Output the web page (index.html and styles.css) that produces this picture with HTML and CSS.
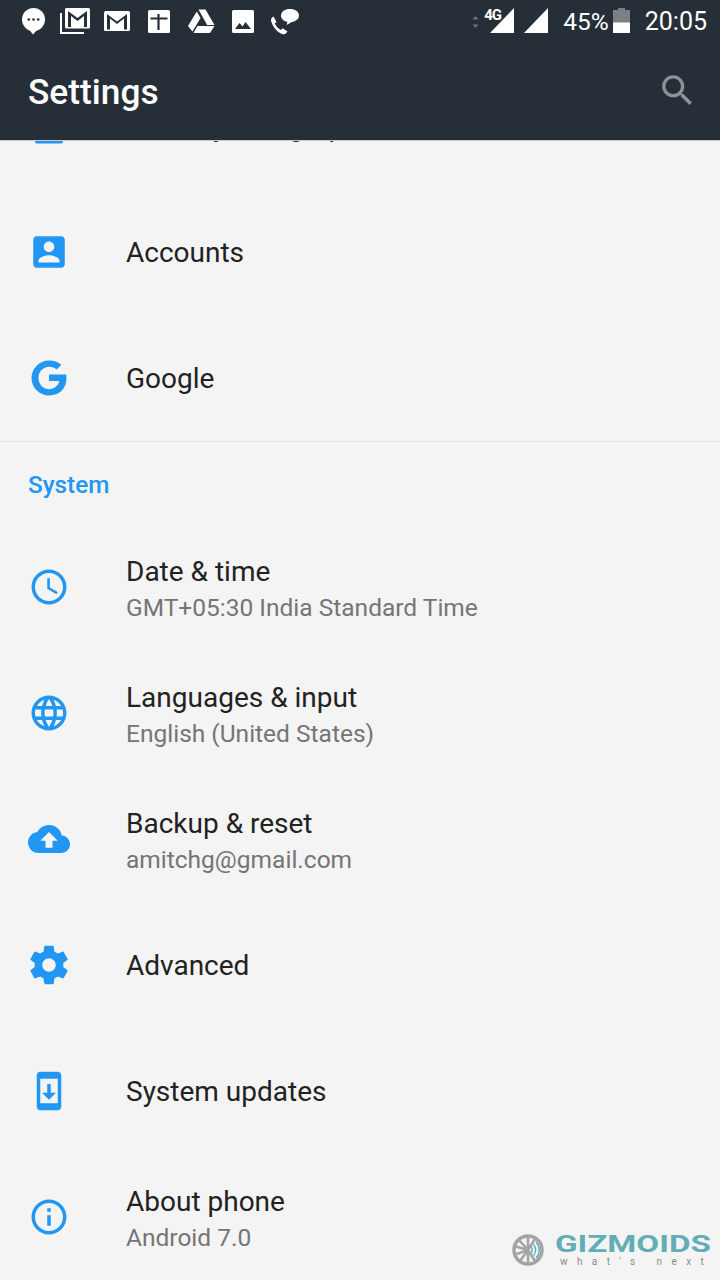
FILE: index.html
```html
<!DOCTYPE html>
<html lang="en">
<head>
    <meta charset="UTF-8">
    <meta name="viewport" content="width=device-width, initial-scale=1.0">
    <title>Settings</title>
    <link rel="stylesheet" href="styles.css">
</head>
<body>
    <div class="phone">
        <header class="appbar">
            <div class="statusbar">
                <div class="notif-icons">
                    <svg class="notif" viewBox="0 0 42 40"><circle cx="21.500" cy="19.500" r="11.500" fill="#fff"/><path d="M15 27l6 7.500 6.500-7.500z" fill="#fff"/><circle cx="16.800" cy="19.500" r="1.300" fill="#262e38"/><circle cx="21.500" cy="19.500" r="1.300" fill="#262e38"/><circle cx="26.200" cy="19.500" r="1.300" fill="#262e38"/></svg>
                    <svg class="notif" viewBox="0 0 42 40"><path d="M7 13v20h23" fill="none" stroke="#fff" stroke-width="2"/><rect x="11" y="8" width="25" height="20.500" rx="1.500" fill="#fff"/><path d="M14 27V11l9.500 7 9.500-7v16h-3V16l-6.500 5-6.500-5v11z" fill="#262e38"/></svg>
                    <svg class="notif" viewBox="0 0 42 40"><rect x="8" y="11" width="26" height="20" rx="1.500" fill="#fff"/><path d="M11 29.500V14l10 7.500L31 14v15.500h-3v-11L21 24l-7-5.500v11z" fill="#262e38"/></svg>
                    <svg class="notif" viewBox="0 0 42 40"><rect x="10" y="10" width="22" height="23" rx="1.500" fill="#fff"/><path d="M12.500 18.500h17M20.500 14v16" stroke="#262e38" stroke-width="2.200" fill="none"/></svg>
                    <svg class="notif" viewBox="0 0 42 40"><path d="M18.500 9.500h7L34.500 25h-7.300z" fill="#fff"/><path d="M16.800 11.500l3.700 6.500L12.500 31.500 8 26z" fill="#fff"/><path d="M17.500 26h17L30 33H13.500z" fill="#fff"/></svg>
                    <svg class="notif" viewBox="0 0 42 40"><rect x="10" y="10" width="22" height="23" rx="1.500" fill="#fff"/><path d="M13 29l4.500-6 3 3.500 3-4.500 5.500 7z" fill="#262e38"/></svg>
                    <svg class="notif" viewBox="0 0 42 40"><path d="M9.500 16.500l3 5.500-1.800 1.500c1.500 3 3.500 5.200 6.300 6.500l1.800-1.700 4.700 3.200-2 2.300c-1 .6-2.200.7-3.500.2C12.500 31.500 8.500 26.500 7 20.500c-.2-1.500.8-3 2.500-4z" fill="#fff"/><path d="M26 9c-5 0-9 2.700-9 6.500 0 3.400 3 5.900 6.500 6.400l-1 3.100 5.500-3c3.700-.7 7-3 7-6.500C35 11.700 31 9 26 9z" fill="#fff"/></svg>
                </div>
                <div class="sys-icons">
                    <svg class="updown" viewBox="0 0 7 12"><path d="M3.500 0L6.500 3.500H.5zM3.500 12L.5 8.500h6z" fill="#6f747b"/></svg>
                    <span class="net-label">4G</span>
                    <svg class="signal lte" viewBox="0 0 24 25"><path d="M24 0v25H0z" fill="#fff"/></svg>
                    <svg class="signal" viewBox="0 0 24 25"><path d="M24 0v25H0z" fill="#fff"/></svg>
                    <span class="battery-text">45%</span>
                    <svg class="battery" viewBox="0 0 17 25"><path d="M5 0h7v2h5v13H0V2h5z" fill="#7b8087"/><rect y="14.500" width="17" height="10.500" fill="#fff"/></svg>
                    <span class="clock">20:05</span>
                </div>
            </div>
            <div class="toolbar">
                <h1>Settings</h1>
                <svg class="search" viewBox="0 0 24 24"><path d="M15.500 14h-.79l-.28-.27C15.410 12.590 16 11.110 16 9.500 16 5.910 13.090 3 9.500 3S3 5.910 3 9.500 5.910 16 9.500 16c1.610 0 3.090-.59 4.230-1.570l.27.28v.79l5 4.990L20.490 19l-4.990-5zm-6 0C7.010 14 5 11.990 5 9.500S7.010 5 9.500 5 14 7.010 14 9.500 11.990 14 9.500 14z"/></svg>
            </div>
        </header>

        <main class="list">
            <div class="row">
                <svg class="icon" viewBox="0 0 24 24"><rect x="4" y="3" width="16" height="19" rx="1.500"/></svg>
                <div class="label"><div class="title">Security &amp; fingerprint</div></div>
            </div>
            <div class="row">
                <svg class="icon" viewBox="0 0 24 24"><path d="M3 5v14c0 1.100.89 2 2 2h14c1.100 0 2-.9 2-2V5c0-1.100-.9-2-2-2H5c-1.110 0-2 .9-2 2zm12 4c0 1.660-1.340 3-3 3s-3-1.340-3-3 1.340-3 3-3 3 1.340 3 3zm-9 8c0-2 4-3.100 6-3.100s6 1.100 6 3.100v1H6v-1z"/></svg>
                <div class="label"><div class="title">Accounts</div></div>
            </div>
            <div class="row">
                <svg class="icon" viewBox="0 0 24 24"><path d="M12.100 2C6.500 2 2 6.500 2 12s4.500 10 10.100 10c5.800 0 9.900-4 9.900-9.800 0-.9-.1-1.500-.2-2.200H12v3.700h5.900c-.5 2.600-2.900 4.700-5.800 4.700-3.500 0-6.100-2.900-6.100-6.400s2.600-6.400 6.100-6.400c1.700 0 3.100.6 4.200 1.600l2.800-2.800C17.100 2.900 14.800 2 12.100 2z"/></svg>
                <div class="label"><div class="title">Google</div></div>
            </div>
            <div class="category">System</div>
            <div class="row">
                <svg class="icon" viewBox="0 0 24 24"><path d="M11.990 2C6.470 2 2 6.480 2 12s4.470 10 9.990 10C17.520 22 22 17.520 22 12S17.520 2 11.990 2zM12 20c-4.420 0-8-3.580-8-8s3.580-8 8-8 8 3.580 8 8-3.580 8-8 8zM12.500 7H11v6l5.250 3.150.75-1.230-4.500-2.670z"/></svg>
                <div class="label"><div class="title">Date &amp; time</div><div class="sub">GMT+05:30 India Standard Time</div></div>
            </div>
            <div class="row">
                <svg class="icon" viewBox="0 0 24 24"><path d="M11.990 2C6.470 2 2 6.480 2 12s4.470 10 9.990 10C17.520 22 22 17.520 22 12S17.520 2 11.990 2zm6.930 6h-2.950c-.32-1.250-.78-2.450-1.380-3.560 1.840.63 3.370 1.910 4.330 3.560zM12 4.040c.83 1.200 1.480 2.530 1.910 3.960h-3.820c.43-1.430 1.080-2.760 1.910-3.960zM4.260 14C4.100 13.360 4 12.690 4 12s.1-1.360.26-2h3.380c-.08.66-.14 1.320-.14 2 0 .68.06 1.340.14 2H4.260zm.82 2h2.950c.32 1.250.78 2.450 1.380 3.560-1.840-.63-3.370-1.900-4.330-3.560zm2.950-8H5.080c.96-1.660 2.490-2.930 4.330-3.560C8.810 5.550 8.350 6.750 8.030 8zM12 19.960c-.83-1.200-1.480-2.530-1.910-3.960h3.820c-.43 1.430-1.080 2.760-1.910 3.960zM14.340 14H9.660c-.09-.66-.16-1.320-.16-2 0-.68.07-1.350.16-2h4.680c.09.650.16 1.320.16 2 0 .68-.07 1.340-.16 2zm.25 5.560c.6-1.110 1.060-2.310 1.380-3.560h2.950c-.96 1.650-2.490 2.930-4.330 3.560zM16.360 14c.08-.66.14-1.320.14-2 0-.68-.06-1.340-.14-2h3.380c.16.640.26 1.310.26 2s-.1 1.360-.26 2h-3.380z"/></svg>
                <div class="label"><div class="title">Languages &amp; input</div><div class="sub">English (United States)</div></div>
            </div>
            <div class="row">
                <svg class="icon" viewBox="0 0 24 24"><path d="M19.350 10.040C18.670 6.590 15.640 4 12 4 9.110 4 6.600 5.640 5.350 8.040 2.340 8.360 0 10.910 0 14c0 3.310 2.690 6 6 6h13c2.760 0 5-2.240 5-5 0-2.640-2.050-4.780-4.650-4.960zM14 13v4h-4v-4H7l5-5 5 5h-3z"/></svg>
                <div class="label"><div class="title">Backup &amp; reset</div><div class="sub">amitchg@gmail.com</div></div>
            </div>
            <div class="row">
                <svg class="icon gear" viewBox="0 0 24 24"><path d="M19.430 12.980c.04-.32.07-.64.07-.98s-.03-.66-.07-.98l2.110-1.650c.19-.15.24-.42.12-.64l-2-3.460c-.12-.22-.39-.3-.61-.22l-2.490 1c-.52-.4-1.080-.73-1.690-.98l-.38-2.650C14.460 2.180 14.250 2 14 2h-4c-.25 0-.46.18-.49.42l-.38 2.650c-.61.25-1.170.59-1.690.98l-2.490-1c-.23-.09-.49 0-.61.22l-2 3.460c-.13.22-.07.49.12.64l2.110 1.650c-.04.32-.07.65-.07.98s.03.66.07.98l-2.110 1.650c-.19.15-.24.42-.12.64l2 3.460c.12.22.39.3.61.22l2.490-1c.52.4 1.080.73 1.690.98l.38 2.650c.03.24.24.42.49.42h4c.25 0 .46-.18.49-.42l.38-2.650c.61-.25 1.170-.59 1.690-.98l2.490 1c.23.09.49 0 .61-.22l2-3.460c.12-.22.07-.49-.12-.64l-2.110-1.650zM12 15.500c-1.930 0-3.500-1.570-3.500-3.500s1.570-3.500 3.500-3.500 3.500 1.570 3.500 3.500-1.570 3.500-3.500 3.500z"/></svg>
                <div class="label"><div class="title">Advanced</div></div>
            </div>
            <div class="row">
                <svg class="icon" viewBox="0 0 24 24"><path d="M17 1.010L7 1c-1.100 0-2 .9-2 2v18c0 1.100.9 2 2 2h10c1.100 0 2-.9 2-2V3c0-1.100-.9-1.990-2-1.990zM17 19H7V5h10v14zm-1-6h-3V8h-2v5H8l4 4 4-4z"/></svg>
                <div class="label"><div class="title">System updates</div></div>
            </div>
            <div class="row">
                <svg class="icon" viewBox="0 0 24 24"><path d="M11 17h2v-6h-2v6zm1-15C6.480 2 2 6.480 2 12s4.480 10 10 10 10-4.480 10-10S17.520 2 12 2zm0 18c-4.410 0-8-3.590-8-8s3.590-8 8-8 8 3.590 8 8-3.590 8-8 8zM11 9h2V7h-2v2z"/></svg>
                <div class="label"><div class="title">About phone</div><div class="sub">Android 7.0</div></div>
            </div>
        </main>

        <div class="watermark">
            <svg class="wheel" viewBox="0 0 32 32">
                <circle cx="16" cy="16" r="14" fill="none" stroke="#a3a5a5" stroke-width="3.500"/>
                <path d="M16 16V3M16 16L7 6M16 16L2 12M16 16L2 21M16 16L8 27M16 16V29M16 16L23 5M16 16l7 11" stroke="#a3a5a5" stroke-width="2.600"/>
                <path d="M19 13a4 4 0 0 1 0 6M21.500 10.500a8 8 0 0 1 0 11M24 8a11.500 11.500 0 0 1 0 16" fill="none" stroke="#62aeb6" stroke-width="1.400"/>
            </svg>
            <div class="brand">
                <div class="brand-name">GIZMOIDS</div>
                <div class="brand-tag">what's next</div>
            </div>
        </div>
    </div>
</body>
</html>
```

FILE: styles.css
```css
* {
    box-sizing: border-box;
}

body {
    margin: 0;
    font-family: Roboto, "Noto Sans", sans-serif;
    background: #f4f4f4;
}

.phone {
    width: 720px;
    height: 1280px;
    overflow: hidden;
    position: relative;
    background: #f4f4f4;
}

.appbar {
    position: relative;
    z-index: 2;
    height: 141px;
    background: #262e38;
    border-bottom: 1px solid #c9cbcd;
    color: #fff;
}

.statusbar {
    display: flex;
    justify-content: space-between;
    align-items: flex-start;
    height: 44px;
    padding: 0 13px 0 12px;
}

.notif-icons {
    display: flex;
}

.notif {
    width: 42px;
    height: 40px;
    display: block;
}

.sys-icons {
    display: flex;
    align-items: flex-start;
    line-height: 44px;
}

.updown {
    width: 7px;
    height: 12px;
    margin: 16px 5px 0 0;
}

.net-label {
    width: 0;
    margin-top: 5px;
    font-size: 15px;
    line-height: 20px;
    font-weight: 700;
    letter-spacing: -1px;
}

.signal {
    width: 24px;
    height: 25px;
    margin: 8px 0 0 10px;
}

.signal.lte {
    margin-left: 6px;
}

.battery-text {
    font-size: 24.500px;
    margin-left: 15px;
}

.battery {
    width: 17px;
    height: 25px;
    margin: 8px 0 0 4px;
}

.clock {
    font-size: 25px;
    margin-left: 15px;
}

.toolbar {
    display: flex;
    justify-content: space-between;
    align-items: center;
    height: 96px;
    padding: 0 22px 0 28px;
}

.toolbar h1 {
    margin: 0;
    font-size: 35.300px;
    font-weight: 500;
}

.search {
    width: 41px;
    height: 41px;
    margin-top: -3px;
    fill: #8e9196;
}

.list {
    margin-top: -78px;
}

.row {
    display: flex;
    align-items: center;
    height: 126px;
    padding-left: 28px;
    gap: 56px;
}

.icon {
    width: 42px;
    height: 42px;
    flex: none;
    fill: #2196f3;
}

.icon.gear {
    width: 46px;
    height: 46px;
    margin: 0 -2px;
}

.label {
    padding-top: 2px;
}

.title {
    font-size: 28px;
    line-height: 36px;
    color: #222;
}

.sub {
    font-size: 24.500px;
    line-height: 36px;
    margin-bottom: -3px;
    color: #757575;
}

.category {
    height: 83px;
    padding: 29px 0 0 28px;
    border-top: 1px solid #e2e2e2;
    font-size: 24.300px;
    line-height: 28px;
    font-weight: 500;
    color: #2196f3;
}

.watermark {
    position: absolute;
    left: 512px;
    top: 1232px;
    display: flex;
    align-items: center;
    gap: 11px;
}

.wheel {
    width: 32px;
    height: 34px;
}

.brand-name {
    font-size: 24px;
    line-height: 24px;
    font-weight: 700;
    color: #62aeb6;
    white-space: nowrap;
    transform-origin: left;
    transform: scaleX(1.38);
}

.brand-tag {
    padding-left: 5px;
    font-size: 10px;
    line-height: 12px;
    letter-spacing: 9.400px;
    color: #8a8a8a;
    white-space: nowrap;
}
```
